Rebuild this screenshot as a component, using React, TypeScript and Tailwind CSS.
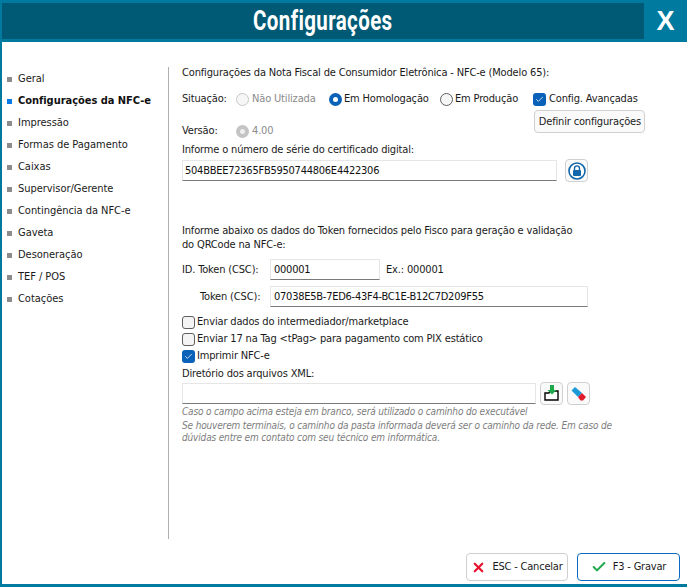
import React from 'react';
import { Check, X } from 'lucide-react';

const menuItems = [
  'Geral',
  'Configurações da NFC-e',
  'Impressão',
  'Formas de Pagamento',
  'Caixas',
  'Supervisor/Gerente',
  'Contingência da NFC-e',
  'Gaveta',
  'Desoneração',
  'TEF / POS',
  'Cotações',
];

const Radio = ({ checked, disabled }: { checked?: boolean; disabled?: boolean }) => {
  if (checked && disabled) {
    return (
      <span className="flex h-[13px] w-[13px] shrink-0 items-center justify-center rounded-full bg-[#c4c4c4]">
        <span className="h-[5px] w-[5px] rounded-full bg-[#efefef]" />
      </span>
    );
  }
  if (checked) {
    return (
      <span className="flex h-[13px] w-[13px] shrink-0 items-center justify-center rounded-full bg-[#0a62b8]">
        <span className="h-[5px] w-[5px] rounded-full bg-white" />
      </span>
    );
  }
  return (
    <span
      className={`h-[13px] w-[13px] shrink-0 rounded-full border bg-[#f6f6f6] ${disabled ? 'border-[#c8c8c8]' : 'border-[#5f5f5f]'}`}
    />
  );
};

const Checkbox = ({ checked }: { checked?: boolean }) =>
  checked ? (
    <span className="flex h-[13px] w-[13px] shrink-0 items-center justify-center rounded-[3px] bg-[#0a62b8]">
      <Check className="h-[9px] w-[9px] text-white" strokeWidth={2} />
    </span>
  ) : (
    <span className="h-[13px] w-[13px] shrink-0 rounded-[3px] border border-[#5f5f5f] bg-[#f4f4f4]" />
  );

const Field = ({ value, className }: { value?: string; className: string }) => (
  <div
    className={`flex h-[21px] items-center border border-[#e6e6e6] border-b-[#7a7a7a] bg-white px-[2px] tracking-[-0.25px] text-[#111] ${className}`}
  >
    {value}
  </div>
);

const IconButton = ({ children }: { children: React.ReactNode }) => (
  <button className="flex h-[23px] w-[23px] shrink-0 items-center justify-center rounded-[4px] border border-[#d0d0d0] bg-[#fafafa]">
    {children}
  </button>
);

export default function App() {
  return (
    <div className="relative flex h-[587px] w-[687px] flex-col overflow-hidden border-l-2 border-[#007a9e] bg-white font-['DejaVu_Sans_Condensed','Open_Sans',sans-serif] text-[11px] leading-[14px] text-[#1a1a1a]">
      {/* Title bar */}
      <div className="flex h-[42px] shrink-0 border-y-[3px] border-[#007a9e] bg-[#007a9e]">
        <div className="flex flex-1 items-center justify-center bg-[#015a75]">
          <span className="origin-center scale-x-[.76] font-['Roboto',sans-serif] text-[27px] font-bold tracking-[0.5px] text-white">
            Configurações
          </span>
        </div>
        <div className="flex w-[43px] items-center justify-center">
          <span className="font-['Liberation_Sans',sans-serif] text-[27px] font-bold text-white">X</span>
        </div>
      </div>

      <div className="flex flex-1 min-h-0">
        {/* Side menu */}
        <div className="w-[166px] shrink-0 pt-[30px] tracking-[-0.04px]">
          <ul className="flex flex-col gap-[8px]">
            {menuItems.map((item) => {
              const active = item === 'Configurações da NFC-e';
              return (
                <li key={item} className="flex items-center pl-[5px]">
                  <span className={`h-[5px] w-[5px] ${active ? 'bg-[#0a7ae6]' : 'bg-[#8c8c8c]'}`} />
                  <span className={`ml-[6px] ${active ? 'font-bold text-[#111]' : ''}`}>{item}</span>
                </li>
              );
            })}
          </ul>
        </div>

        {/* Content */}
        <div className="flex flex-1 flex-col">
          <div className="mt-[25px] mb-[45px] flex-1 border-l border-[#b0b0b0] pl-[13px] tracking-[-0.16px]">
            <p className="mt-[-1px]">Configurações da Nota Fiscal de Consumidor Eletrônica - NFC-e (Modelo 65):</p>

            <div className="mt-[12px] flex items-center">
              <span className="w-[54px]">Situação:</span>
              <Radio disabled />
              <span className="ml-[3px] w-[77px] text-[#8a8a8a]">Não Utilizada</span>
              <Radio checked />
              <span className="ml-[2px] w-[96px]">Em Homologação</span>
              <Radio />
              <span className="ml-[2px] w-[78px]">Em Produção</span>
              <Checkbox checked />
              <span className="ml-[3px]">Config. Avançadas</span>
            </div>

            <div className="mt-[2px] flex items-start">
              <span className="mt-[16px] w-[54px]">Versão:</span>
              <div className="mt-[16px] flex items-center">
                <Radio checked disabled />
                <span className="ml-[3px] text-[#8a8a8a]">4.00</span>
              </div>
              <button className="mt-[2px] ml-[261px] h-[23px] w-[111px] rounded-[4px] border border-[#d0d0d0] bg-[#fafafa]">
                Definir configurações
              </button>
            </div>

            <p className="mt-[5px]">Informe o número de série do certificado digital:</p>

            <div className="mt-[2px] flex items-center gap-[8px]">
              <Field value="504BBEE72365FB5950744806E4422306" className="w-[375px]" />
              <IconButton>
                <svg viewBox="0 0 18 18" className="h-[18px] w-[18px]">
                  <circle cx="9" cy="9" r="8" fill="#fff" stroke="#1166aa" strokeWidth="1.6" />
                  <rect x="5" y="8" width="8" height="6" rx="1" fill="#1166aa" />
                  <path d="M6.5 8V6.4a2.5 2.5 0 0 1 5 0V8" fill="none" stroke="#1166aa" strokeWidth="1.4" />
                </svg>
              </IconButton>
            </div>

            <p className="mt-[42px] w-[400px]">
              Informe abaixo os dados do Token fornecidos pelo Fisco para geração e validação do QRCode na NFC-e:
            </p>

            <div className="mt-[7px] flex items-center">
              <span className="w-[88px]">ID. Token (CSC):</span>
              <Field value="000001" className="w-[110px] pl-[3px]" />
              <span className="ml-[6px]">Ex.: 000001</span>
            </div>

            <div className="mt-[6px] flex items-center">
              <span className="w-[88px] pl-[18px]">Token (CSC):</span>
              <Field value="07038E5B-7ED6-43F4-BC1E-B12C7D209F55" className="w-[318px] pl-[3px]" />
            </div>

            <div className="mt-[8px] flex flex-col gap-[3px]">
              <div className="flex items-center gap-[2px]">
                <Checkbox />
                <span>Enviar dados do intermediador/marketplace</span>
              </div>
              <div className="flex items-center gap-[2px]">
                <Checkbox />
                <span>Enviar 17 na Tag &lt;tPag&gt; para pagamento com PIX estático</span>
              </div>
              <div className="flex items-center gap-[2px]">
                <Checkbox checked />
                <span>Imprimir NFC-e</span>
              </div>
            </div>

            <p className="mt-[4px]">Diretório dos arquivos XML:</p>

            <div className="mt-[1px] flex items-center gap-[4px]">
              <Field className="w-[354px]" />
              <IconButton>
                <svg viewBox="0 0 18 18" className="h-[18px] w-[18px]">
                  <path d="M3 8h3l1-2h8v9H2V8z" fill="#fff" stroke="#000" strokeWidth="1.4" />
                  <path d="M7 0h4v5h2.5L9 9.5 4.5 5H7z" fill="#1fa84a" />
                </svg>
              </IconButton>
              <IconButton>
                <svg viewBox="0 0 18 18" className="h-[18px] w-[18px]">
                  <path d="M1.5 5.5 5 2l7 6-4 4z" fill="#1d9ad6" />
                  <path d="M8 12l4-4 4 4-3 3.5H10.5z" fill="#e01b2c" />
                </svg>
              </IconButton>
            </div>

            <div className="mt-[1px] w-[450px] text-[10px] italic leading-[12px] text-[#7d7d7d]">
              <p>Caso o campo acima esteja em branco, será utilizado o caminho do executável</p>
              <p className="mt-[2px]">
                Se houverem terminais, o caminho da pasta informada deverá ser o caminho da rede. Em caso de dúvidas entre em contato com seu técnico em informática.
              </p>
            </div>
          </div>
        </div>
      </div>

      {/* Footer */}
      <div className="absolute bottom-[6px] right-[7px] flex gap-[9px] tracking-[-0.2px]">
        <button className="flex h-[28px] w-[102px] items-center justify-center gap-[6px] rounded-[4px] border border-[#cfcfcf] bg-white">
          <X className="h-[15px] w-[15px] text-[#e8112d]" strokeWidth={3.5} />
          <span>ESC - Cancelar</span>
        </button>
        <button className="flex h-[28px] w-[103px] items-center justify-center gap-[6px] rounded-[4px] border border-[#0a6cc0] bg-white">
          <Check className="h-[16px] w-[16px] text-[#1fa84a]" strokeWidth={3} />
          <span>F3 - Gravar</span>
        </button>
      </div>
      <div className="h-[3px] shrink-0 bg-[#007a9e]" />
    </div>
  );
}
